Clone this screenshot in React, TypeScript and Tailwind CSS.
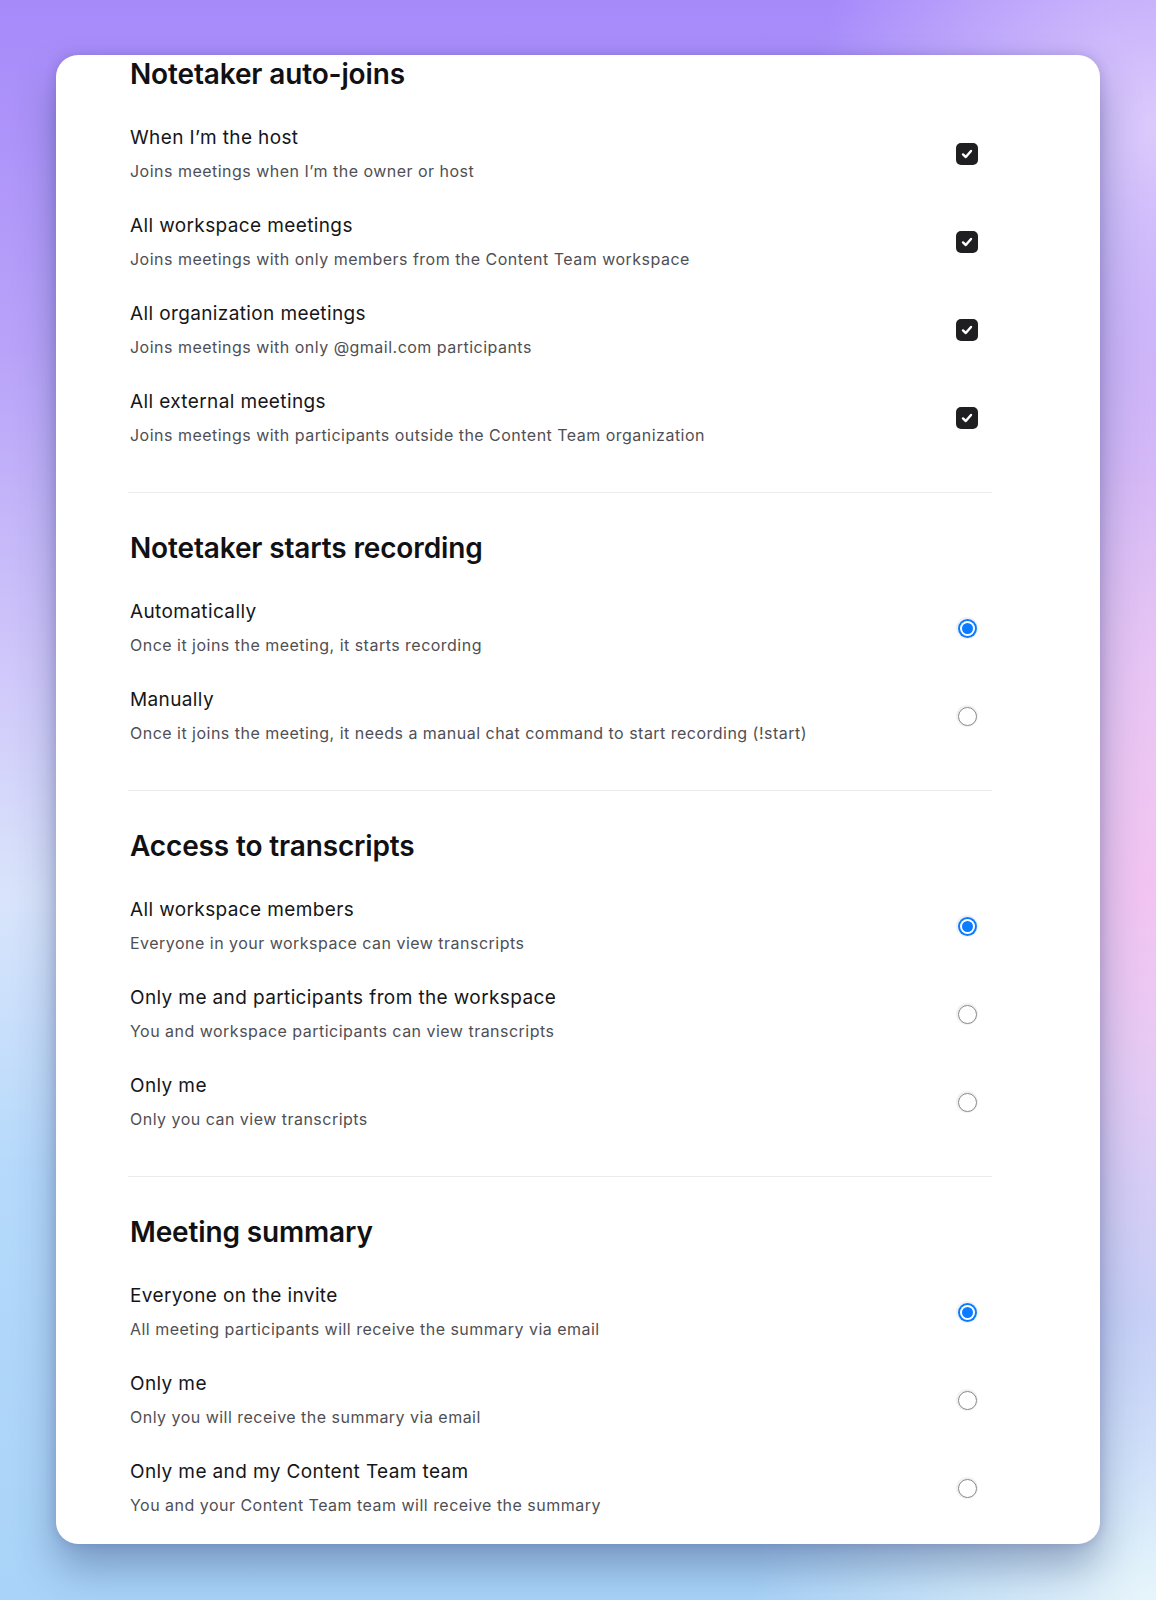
import React from "react";

type Row = { title: string; desc: string; checked?: boolean };

const Checkbox = () => (
  <div className="w-[22px] h-[22px] rounded-[5px] bg-[#1f1f22] flex items-center justify-center">
    <svg width="14" height="14" viewBox="0 0 14 14" fill="none">
      <path d="M3 7.4 L5.8 10 L11 4" stroke="#ffffff" strokeWidth="2.4" strokeLinecap="round" strokeLinejoin="round" />
    </svg>
  </div>
);

const Radio = ({ checked }: { checked?: boolean }) =>
  checked ? (
    <div className="w-[22px] h-[22px] rounded-full bg-[#f1f1f4] flex items-center justify-center">
      <div className="w-[19px] h-[19px] rounded-full bg-[#0b7bff] flex items-center justify-center">
        <div className="w-[15px] h-[15px] rounded-full bg-white flex items-center justify-center">
          <div className="w-[11px] h-[11px] rounded-full bg-[#0b7bff]" />
        </div>
      </div>
    </div>
  ) : (
    <div className="w-[22px] h-[22px] rounded-full bg-[#f1f1f4] flex items-center justify-center">
      <div className="w-[19px] h-[19px] rounded-full bg-white border-[1.5px] border-[#8a8a8e]" />
    </div>
  );

const Section = ({
  title,
  rows,
  kind,
  last,
  first,
}: {
  title: string;
  rows: Row[];
  kind: "check" | "radio";
  last?: boolean;
  first?: boolean;
}) => (
  <div className={first ? "" : "pt-[39px]"}>
    <h2 className="pl-[2px] text-[28px] leading-[32px] font-semibold text-[#111113] tracking-[-0.005em]">
      {title}
    </h2>
    <div className="mt-[20px]">
      {rows.map((r) => (
        <div key={r.title} className="flex items-center justify-between py-4 pl-[2px] pr-[14px]">
          <div className="flex flex-col gap-[10px]">
            <div className="text-[19px] leading-[24px] text-[#161618] tracking-[0.02em]">{r.title}</div>
            <div className="text-[16px] leading-[22px] text-[#4f4f55] tracking-[0.03em]">{r.desc}</div>
          </div>
          {kind === "check" ? <Checkbox /> : <Radio checked={r.checked} />}
        </div>
      ))}
    </div>
    {!last && <div className="mt-[30px] h-px bg-[#ececf0]" />}
  </div>
);

export default function App() {
  return (
    <div
      className="w-full min-h-[1600px] pt-[55px] pb-[56px] bg-[radial-gradient(ellipse_30%_22%_at_100%_8%,#dccafc_0%,rgba(220,202,252,0)_100%),radial-gradient(ellipse_42%_42%_at_100%_55%,#f2c3f1_0%,rgba(242,195,241,0)_100%),radial-gradient(ellipse_35%_18%_at_100%_100%,#e8f5fb_0%,rgba(232,245,251,0)_100%),linear-gradient(180deg,#a68afa_0%,#b9a3f9_22%,#d0c8fa_42%,#d9e4fb_56%,#b4d9fb_74%,#a9d3f8_100%)]"
      style={{ fontFamily: "Inter, 'Noto Sans', sans-serif" }}
    >
      <div className="ml-[56px] w-[1044px] h-[1489px] bg-white rounded-[22px] shadow-[0_24px_40px_rgba(40,60,110,0.38),0_0_12px_rgba(60,40,120,0.2)] pt-[3px] overflow-hidden">
        <div className="ml-[72px] w-[864px]">
          <Section
            first
            title="Notetaker auto-joins"
            kind="check"
            rows={[
              { title: "When I’m the host", desc: "Joins meetings when I’m the owner or host" },
              { title: "All workspace meetings", desc: "Joins meetings with only members from the Content Team workspace" },
              { title: "All organization meetings", desc: "Joins meetings with only @gmail.com participants" },
              { title: "All external meetings", desc: "Joins meetings with participants outside the Content Team organization" },
            ]}
          />
          <Section
            title="Notetaker starts recording"
            kind="radio"
            rows={[
              { title: "Automatically", desc: "Once it joins the meeting, it starts recording", checked: true },
              { title: "Manually", desc: "Once it joins the meeting, it needs a manual chat command to start recording (!start)" },
            ]}
          />
          <Section
            title="Access to transcripts"
            kind="radio"
            rows={[
              { title: "All workspace members", desc: "Everyone in your workspace can view transcripts", checked: true },
              { title: "Only me and participants from the workspace", desc: "You and workspace participants can view transcripts" },
              { title: "Only me", desc: "Only you can view transcripts" },
            ]}
          />
          <Section
            last
            title="Meeting summary"
            kind="radio"
            rows={[
              { title: "Everyone on the invite", desc: "All meeting participants will receive the summary via email", checked: true },
              { title: "Only me", desc: "Only you will receive the summary via email" },
              { title: "Only me and my Content Team team", desc: "You and your Content Team team will receive the summary" },
            ]}
          />
        </div>
      </div>
    </div>
  );
}
